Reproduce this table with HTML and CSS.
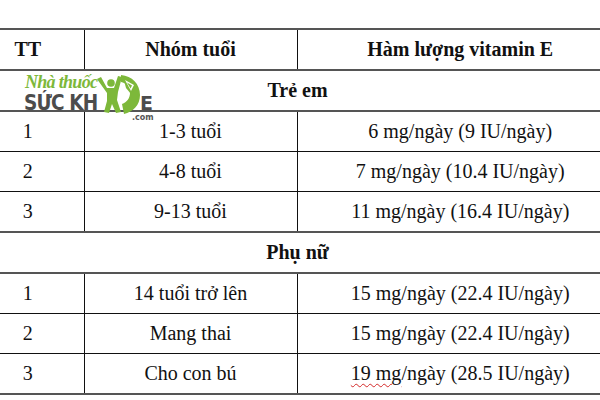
FILE: index.html
```html
<!DOCTYPE html>
<html lang="vi">
<head>
<meta charset="utf-8">
<link rel="stylesheet" href="styles.css">
</head>
<body>
<div class="page">
  <table class="vt">
    <colgroup>
      <col class="c1"><col class="c2"><col class="c3">
    </colgroup>
    <tr class="head thick-top thick-bottom">
      <th>TT</th><th>Nhóm tuổi</th><th>Hàm lượng vitamin E</th>
    </tr>
    <tr class="section thick-bottom">
      <th colspan="3">Trẻ em</th>
    </tr>
    <tr><td>1</td><td>1-3 tuổi</td><td>6 mg/ngày (9 IU/ngày)</td></tr>
    <tr><td>2</td><td>4-8 tuổi</td><td>7 mg/ngày (10.4 IU/ngày)</td></tr>
    <tr class="thick-bottom"><td>3</td><td>9-13 tuổi</td><td>11 mg/ngày (16.4 IU/ngày)</td></tr>
    <tr class="section thick-bottom">
      <th colspan="3">Phụ nữ</th>
    </tr>
    <tr><td>1</td><td>14 tuổi trở lên</td><td>15 mg/ngày (22.4 IU/ngày)</td></tr>
    <tr><td>2</td><td>Mang thai</td><td>15 mg/ngày (22.4 IU/ngày)</td></tr>
    <tr class="thick-bottom"><td>3</td><td>Cho con bú</td><td><span class="spell">19 mg</span>/ngày (28.5 IU/ngày)</td></tr>
  </table>

  <div class="logo">
    <div class="logo-script">Nhà thuốc</div>
    <div class="logo-main">SỨC KH</div>
    <svg class="logo-fig" width="44" height="42" viewBox="0 0 44 42">
      <path d="M24 1 C35 2 43 10 43 21 C43 31 36 38 27 40 L25 30 C30 28 33 24 33 19 C33 13 29 9 24 8 Z" fill="#7db83a"/>
      <path d="M26 3 L39 10 L34 20 L29 14 Z" fill="#7db83a"/>
      <path d="M28 6 L37 11 L34 17 Z" fill="#fff"/>
      <path d="M30 8.5 L35 11.5 L33.5 14.5 Z" fill="#7db83a"/>
      <circle cx="14" cy="9" r="3.8" fill="#7db83a"/>
      <path d="M0 5 L4 3 L10 14 L17 14 L21 2 L25 3 L21 18 L20 26 L24 38 L19 39 L15 30 L12 39 L7 38 L10 27 L10 19 Z" fill="#7db83a"/>
    </svg>
    <div class="logo-e">E</div>
    <div class="logo-com">.com</div>
  </div>
</div>
</body>
</html>
```
FILE: styles.css
```css
html, body {
  margin: 0;
  padding: 0;
  background: #fff;
}
.page {
  position: relative;
  width: 600px;
  height: 400px;
  overflow: hidden;
}
.vt {
  border-collapse: collapse;
  margin: 28px 0 0 -28px;
  width: 651px;
  table-layout: fixed;
  font-family: "Liberation Serif", "Times New Roman", serif;
  font-size: 20px;
  color: #111;
}
.c1 { width: 112px; }
.c2 { width: 213px; }
.c3 { width: 326px; }
.vt th, .vt td {
  height: 39px;
  padding: 0;
  text-align: center;
  vertical-align: middle;
  border: 1px solid #111;
}
.vt th { font-weight: bold; }
.vt tr > :first-child { border-left: none; }
.vt tr > :last-child { border-right: none; }
.vt tr.thick-bottom > * { border-bottom: 2px solid #555; }
.vt tr.thick-top > * { border-top: 2px solid #555; }
.spell {
  text-decoration: underline wavy #d42a2a;
  text-decoration-thickness: 1px;
  text-underline-offset: 3px;
}

.logo {
  position: absolute;
  left: 24px;
  top: 73px;
  width: 130px;
  height: 50px;
  line-height: 1;
}
.logo-script {
  position: absolute;
  left: 1px;
  top: 0;
  font-family: "Liberation Serif", serif;
  font-style: italic;
  font-weight: bold;
  font-size: 18px;
  letter-spacing: -0.7px;
  color: #7db83a;
  white-space: nowrap;
}
.logo-main {
  position: absolute;
  left: 0;
  top: 20px;
  font-family: "DejaVu Sans", sans-serif;
  font-weight: bold;
  font-size: 21px;
  letter-spacing: -1px;
  color: #4c4c4c;
  white-space: nowrap;
  transform: scaleX(0.88);
  transform-origin: left top;
}
.logo-fig {
  position: absolute;
  left: 73px;
  top: 1px;
}
.logo-e {
  position: absolute;
  left: 116px;
  top: 21px;
  font-family: "DejaVu Sans", sans-serif;
  font-weight: bold;
  font-size: 19px;
  color: #4c4c4c;
}
.logo-com {
  position: absolute;
  left: 108px;
  top: 41px;
  font-family: "DejaVu Sans", sans-serif;
  font-weight: bold;
  font-size: 8px;
  color: #555;
}
```
